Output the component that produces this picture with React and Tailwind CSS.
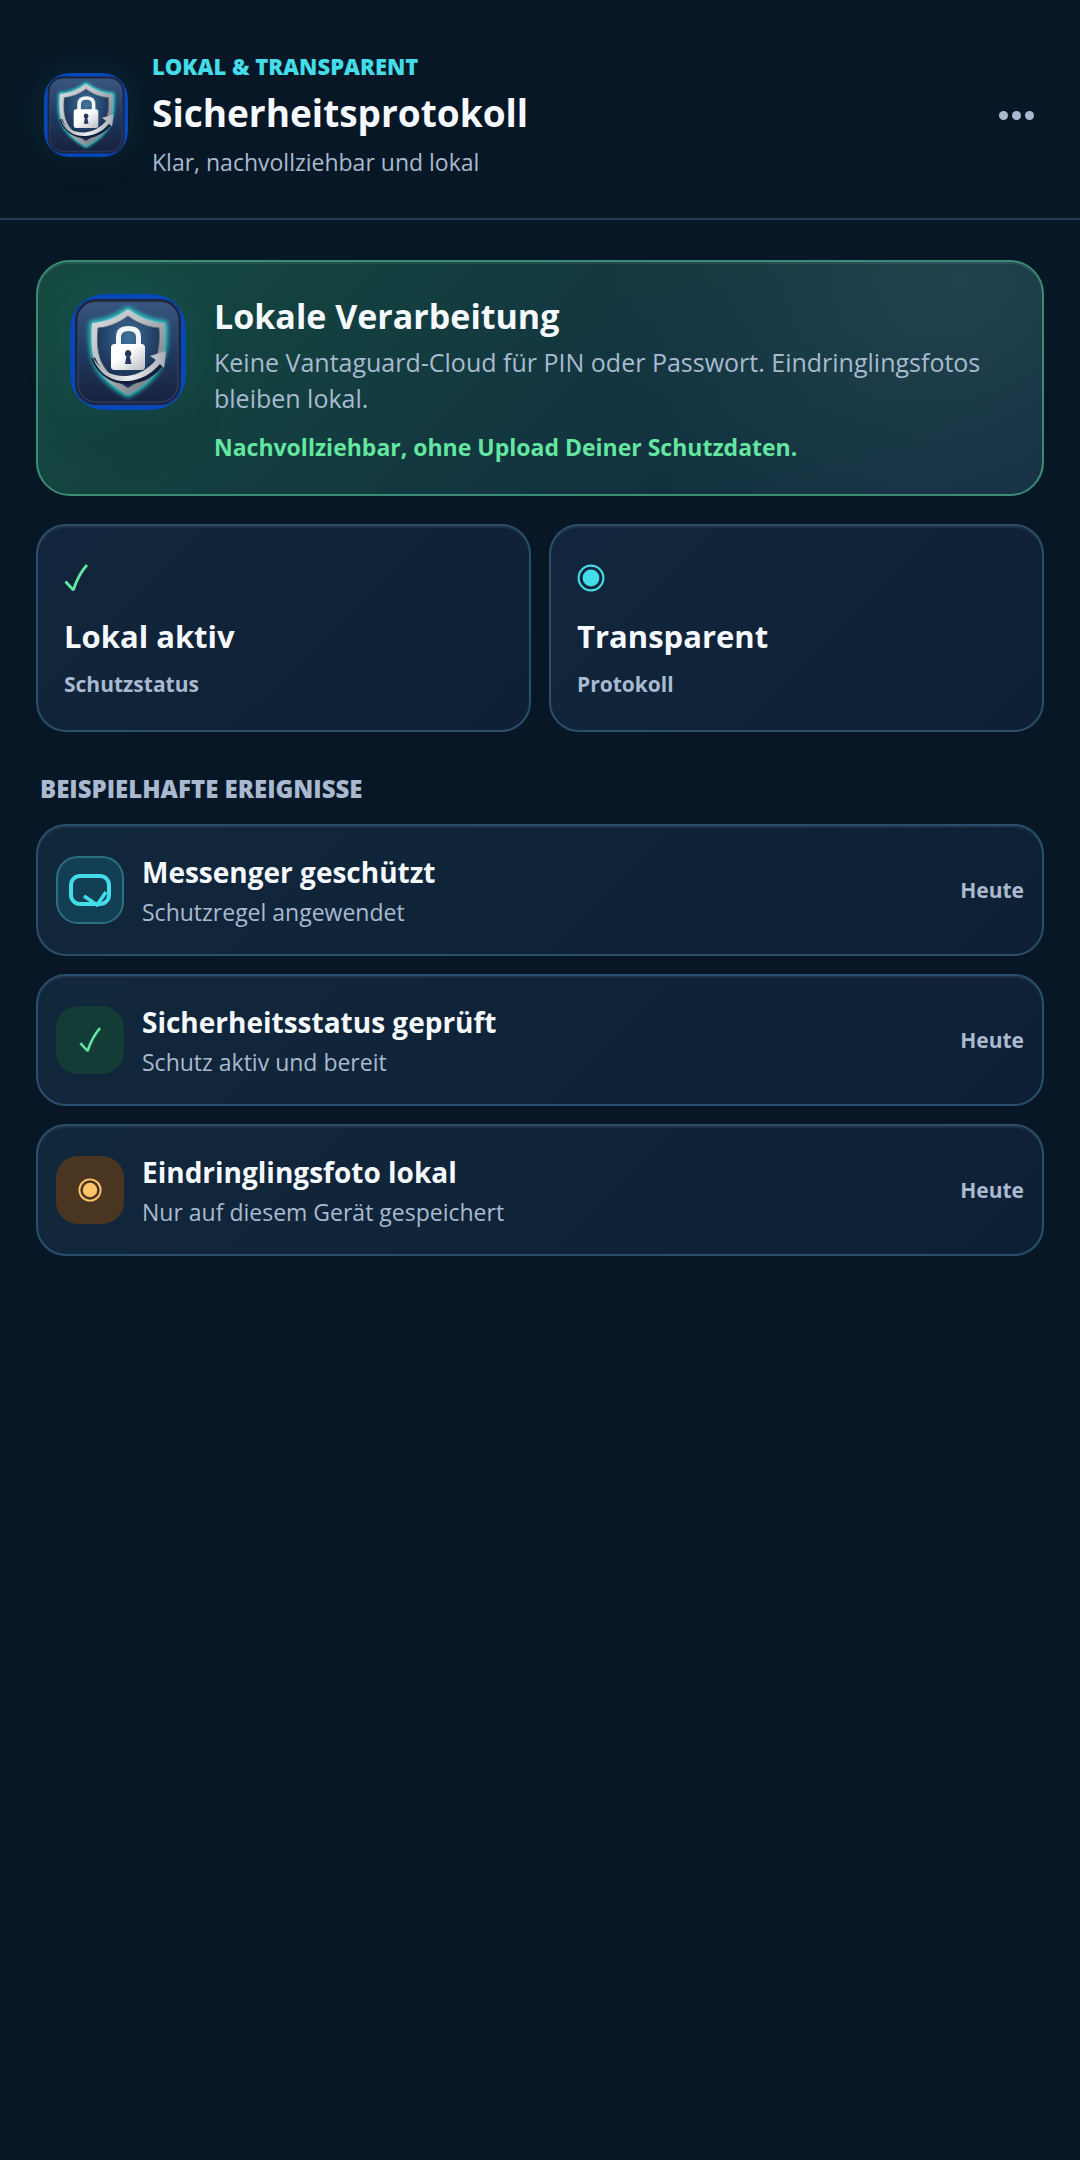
import React from "react";

const events = [
    { icon: "messenger", title: "Messenger geschützt", text: "Schutzregel angewendet", time: "Heute" },
    { icon: "check", title: "Sicherheitsstatus geprüft", text: "Schutz aktiv und bereit", time: "Heute" },
    { icon: "photo", title: "Eindringlingsfoto lokal", text: "Nur auf diesem Gerät gespeichert", time: "Heute" },
];

const ShieldLogo = ({ id, className }) => (
    <svg viewBox="0 0 116 116" className={className} aria-hidden="true">
        <defs>
            <linearGradient id={`${id}-bg`} x1="0" y1="0" x2="0" y2="1">
                <stop offset="0" stopColor="#38567f" />
                <stop offset="0.5" stopColor="#20395f" />
                <stop offset="1" stopColor="#17213f" />
            </linearGradient>
            <linearGradient id={`${id}-steel`} x1="0" y1="0" x2="1" y2="1">
                <stop offset="0" stopColor="#d9dcdf" />
                <stop offset="0.4" stopColor="#b9bec4" />
                <stop offset="0.7" stopColor="#8b939b" />
                <stop offset="1" stopColor="#60676f" />
            </linearGradient>
            <radialGradient id={`${id}-core`} cx="0.5" cy="0.3" r="0.6">
                <stop offset="0" stopColor="#3f719b" />
                <stop offset="1" stopColor="#172d52" />
            </radialGradient>
            <linearGradient id={`${id}-lock`} x1="0" y1="0" x2="1" y2="1">
                <stop offset="0.4" stopColor="#ffffff" />
                <stop offset="1" stopColor="#b9bcc4" />
            </linearGradient>
            <linearGradient id={`${id}-swoosh`} x1="0" y1="0" x2="1" y2="0">
                <stop offset="0" stopColor="#9aa1a8" />
                <stop offset="0.5" stopColor="#eceef0" />
                <stop offset="1" stopColor="#a9aeb5" />
            </linearGradient>
            <filter id={`${id}-glow`} x="-30%" y="-30%" width="160%" height="160%">
                <feGaussianBlur stdDeviation="2.4" />
            </filter>
        </defs>
        <rect width="116" height="116" rx="34" fill="#0748b8" />
        <rect x="5" y="5" width="106" height="106" rx="21" fill="#1b2540" />
        <rect x="8" y="8" width="100" height="100" rx="18" fill={`url(#${id}-bg)`} stroke="#3d5272" strokeWidth="0.8" />
        <path
            d="M58 15C47 23 36 28 22 29C21 43 21 57 25 68C31 83 43 93 58 101C73 93 85 83 91 68C95 57 96 43 95 29C81 28 69 23 58 15Z"
            fill="#2fe0d4"
            stroke="#2fe0d4"
            strokeWidth="4"
            filter={`url(#${id}-glow)`}
        />
        <path
            d="M58 15C47 23 36 28 22 29C21 43 21 57 25 68C31 83 43 93 58 101C73 93 85 83 91 68C95 57 96 43 95 29C81 28 69 23 58 15Z"
            fill={`url(#${id}-steel)`}
        />
        <path
            d="M58 22C49 29 39 33 28 34C27 46 27 57 31 67C36 78 46 87 58 94C70 87 80 78 85 67C89 57 90 46 89 34C77 33 67 29 58 22Z"
            fill={`url(#${id}-core)`}
            stroke="#5d6670"
            strokeWidth="1"
        />
        <path d="M23 64C30 81 44 89 60 88C73 87 84 80 91 71" fill="none" stroke="#13203c" strokeWidth="4" />
        <path d="M48.500 52V43C48.500 37 52.500 34.500 58.500 34.500S68.500 37 68.500 43V52" fill="none" stroke="#f3f4f6" strokeWidth="5" />
        <rect x="41" y="50" width="34" height="26" rx="3.500" fill={`url(#${id}-lock)`} />
        <path d="M58 56A3.600 3.600 0 0 0 56.400 62.600L55 70H61.500L59.800 62.600A3.600 3.600 0 0 0 58 56Z" fill="#22395f" />
        <path
            d="M22 61C29 76 42 83 57 82C69 81 79 74 86 66L80 62L96 57L94 74L90 70C81 80 71 86 58 87C41 88 27 79 22 61Z"
            fill={`url(#${id}-swoosh)`}
        />
    </svg>
);

const CheckIcon = ({ className }) => (
    <svg viewBox="0 0 24 28" className={className} fill="none" stroke="currentColor" strokeWidth="2.800" aria-hidden="true">
        <path d="M1.500 17.500L9.300 26C12 18 16.500 8 23 1" strokeLinejoin="bevel" />
    </svg>
);

const TargetIcon = ({ className }) => (
    <svg viewBox="0 0 26 26" className={className} aria-hidden="true">
        <circle cx="13" cy="13" r="11.500" fill="none" stroke="currentColor" strokeWidth="2" />
        <circle cx="13" cy="13" r="7.800" fill="currentColor" />
    </svg>
);

const MessengerIcon = () => (
    <svg viewBox="0 0 42 34" className="w-[42px] h-[34px]" fill="none" stroke="currentColor" aria-hidden="true">
        <rect x="2" y="3" width="38" height="28" rx="9" strokeWidth="4" />
        <path d="M15 23L28 32L37 19" strokeWidth="3.600" />
    </svg>
);

const EventIcon = ({ icon }) => {
    if (icon === "messenger") {
        return (
            <div className="size-[68px] shrink-0 flex items-center justify-center rounded-[22px] border-2 border-[#2b6f80] bg-[#123f54] text-[#43dce8]">
                <MessengerIcon />
            </div>
        );
    }
    if (icon === "check") {
        return (
            <div className="size-[68px] shrink-0 flex items-center justify-center rounded-[22px] bg-[#143c37] text-[#63e6a0]">
                <CheckIcon className="w-[22px] h-[26px]" />
            </div>
        );
    }
    return (
        <div className="size-[68px] shrink-0 flex items-center justify-center rounded-[22px] bg-[#4a3620] text-[#ffc46a]">
            <TargetIcon className="size-6" />
        </div>
    );
};

const StatCard = ({ icon, title, label }) => (
    <div className="h-[208px] px-[26px] pt-[38px] rounded-[30px] border-2 border-[#2a4f6d] bg-linear-135 from-[#11263c] to-[#0e2034] shadow-[inset_0_2px_0_rgba(255,255,255,0.06)]">
        {icon}
        <h2 className="mt-6 text-[31px] leading-[40px] font-bold text-[#f6f9ff]">{title}</h2>
        <p className="mt-3 text-[21px] leading-[32px] font-bold text-[#a9bad0]">{label}</p>
    </div>
);

const App = () => {
    return (
        <div className="min-h-screen bg-[#071725] text-[#a9bad0] font-['Open_Sans','Noto_Sans',sans-serif]">
            {/* Header */}
            <header className="flex items-center gap-6 px-11 pt-3 h-[220px] border-b-2 border-[#213f5b]">
                <ShieldLogo id="head" className="size-[84px] shrink-0 rounded-[25px] shadow-[0_0_40px_rgba(67,220,232,0.12),0_16px_40px_rgba(0,0,0,0.2)]" />
                <div className="flex-1">
                    <p className="text-[22px] leading-[30px] font-extrabold text-[#43dce8]">LOKAL &amp; TRANSPARENT</p>
                    <h1 className="mt-1 text-[37px] leading-[56px] font-bold text-[#f6f9ff]">Sicherheitsprotokoll</h1>
                    <p className="mt-1 text-[23px] leading-[34px]">Klar, nachvollziehbar und lokal</p>
                </div>
                <button type="button" aria-label="Mehr" className="flex gap-1 p-[2px]">
                    <span className="size-[9px] rounded-full bg-[#a9bad0]" />
                    <span className="size-[9px] rounded-full bg-[#a9bad0]" />
                    <span className="size-[9px] rounded-full bg-[#a9bad0]" />
                </button>
            </header>

            <main className="px-9 pt-10">
                {/* Local processing */}
                <section className="flex items-start gap-7 min-h-[236px] p-8 rounded-[34px] border-2 border-[#3a8d72] bg-[radial-gradient(circle_at_92%_8%,rgba(70,130,110,0.24),transparent_38%),linear-gradient(135deg,#154a40_0%,#12333f_62%,#142942_100%)] shadow-[inset_0_2px_0_rgba(255,255,255,0.08)]">
                    <ShieldLogo id="hero" className="size-[116px] shrink-0 rounded-[34px] shadow-[0_0_48px_rgba(67,220,232,0.12),0_24px_48px_rgba(0,0,0,0.12)]" />
                    <div className="flex-1">
                        <h2 className="text-[34px] leading-[44px] font-bold text-[#f6f9ff]">Lokale Verarbeitung</h2>
                        <p className="mt-[6px] text-[25px] leading-9">
                            Keine Vantaguard-Cloud für PIN oder Passwort. Eindringlingsfotos bleiben lokal.
                        </p>
                        <p className="mt-4 text-[23px] leading-[30px] font-bold text-[#63e6a0]">
                            Nachvollziehbar, ohne Upload Deiner Schutzdaten.
                        </p>
                    </div>
                </section>

                {/* Status */}
                <section className="mt-7 grid grid-cols-2 gap-[18px]">
                    <StatCard
                        icon={<CheckIcon className="w-6 h-7 text-[#63e6a0]" />}
                        title="Lokal aktiv"
                        label="Schutzstatus"
                    />
                    <StatCard
                        icon={<TargetIcon className="w-7 h-7 text-[#43dce8]" />}
                        title="Transparent"
                        label="Protokoll"
                    />
                </section>

                {/* Events */}
                <h2 className="mt-10 px-1 text-[24px] leading-[34px] font-extrabold">BEISPIELHAFTE EREIGNISSE</h2>
                <ul className="mt-[18px] flex flex-col gap-[18px]">
                    {events.map((event) => (
                        <li
                            key={event.title}
                            className="flex items-center gap-[18px] h-[132px] px-[18px] rounded-[30px] border-2 border-[#2a4f6d] bg-linear-135 from-[#11273b] to-[#0e2035] shadow-[inset_0_2px_0_rgba(255,255,255,0.06)]"
                        >
                            <EventIcon icon={event.icon} />
                            <div className="flex-1 pt-1">
                                <h3 className="text-[28px] leading-[40px] font-bold text-[#f6f9ff]">{event.title}</h3>
                                <p className="text-[23px] leading-[40px]">{event.text}</p>
                            </div>
                            <span className="text-[21px] leading-[30px] font-bold">{event.time}</span>
                        </li>
                    ))}
                </ul>
            </main>
        </div>
    );
};

export default App;
